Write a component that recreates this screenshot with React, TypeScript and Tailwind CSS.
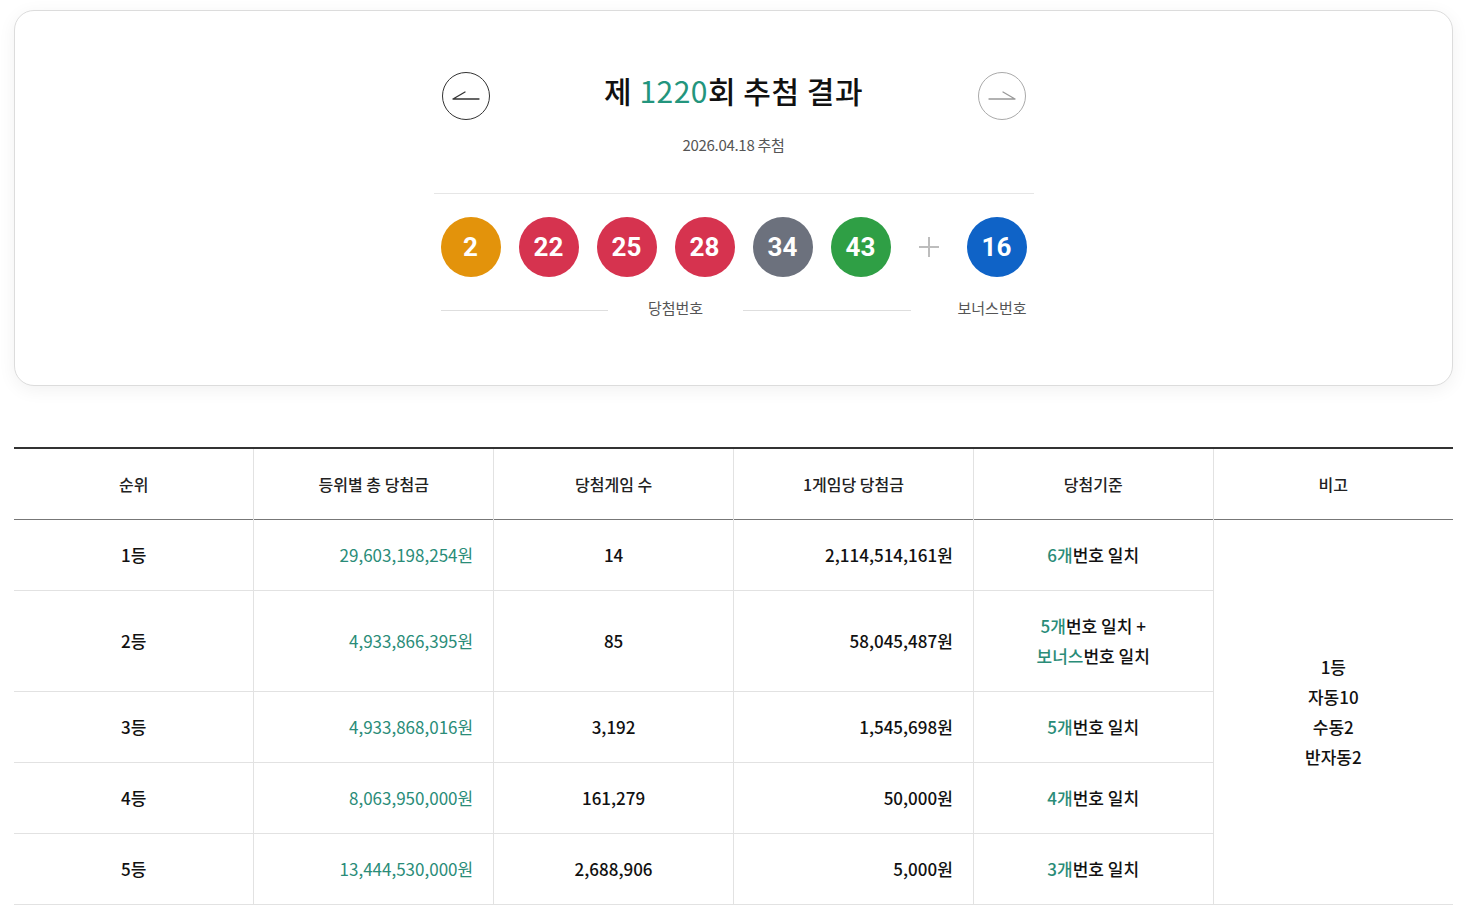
import React from "react";

const FONT = { fontFamily: '"Noto Sans CJK KR", "Noto Sans", sans-serif' };

type Ball = { n: number; c: string };

const balls: Ball[] = [
  { n: 2, c: "bg-[#e3930b]" },
  { n: 22, c: "bg-[#d6334f]" },
  { n: 25, c: "bg-[#d6334f]" },
  { n: 28, c: "bg-[#d6334f]" },
  { n: 34, c: "bg-[#6c717d]" },
  { n: 43, c: "bg-[#2f9f45]" },
];

function BallEl({ n, c }: Ball) {
  return (
    <div
      className={`w-[60px] h-[60px] rounded-full ${c} flex items-center justify-center text-white text-[26px] font-bold leading-none`}
      style={{ fontFamily: 'Roboto, "Noto Sans", sans-serif' }}
    >
      {n}
    </div>
  );
}

function ArrowBtn({ dir }: { dir: "left" | "right" }) {
  const left = dir === "left";
  return (
    <button
      className={`w-[48px] h-[48px] rounded-full border ${
        left ? "border-[#333]" : "border-[#aaa]"
      } flex items-center justify-center bg-white`}
    >
      <svg width="28" height="14" viewBox="0 0 28 14" fill="none">
        {left ? (
          <path d="M1 10 L27 10 M1 10 L13 3" stroke="#333" strokeWidth="1.3" strokeLinecap="round" />
        ) : (
          <path d="M1 10 L27 10 M27 10 L15 3" stroke="#999" strokeWidth="1.3" strokeLinecap="round" />
        )}
      </svg>
    </button>
  );
}

const G = "text-[#2a8c78]";

type Row = {
  rank: string;
  total: string;
  count: string;
  per: string;
  crit: React.ReactNode;
  tall?: boolean;
};

const rows: Row[] = [
  {
    rank: "1등",
    total: "29,603,198,254원",
    count: "14",
    per: "2,114,514,161원",
    crit: (
      <>
        <span className={G}>6개</span>번호 일치
      </>
    ),
  },
  {
    rank: "2등",
    total: "4,933,866,395원",
    count: "85",
    per: "58,045,487원",
    tall: true,
    crit: (
      <>
        <span className={G}>5개</span>번호 일치 +
        <br />
        <span className={G}>보너스</span>번호 일치
      </>
    ),
  },
  {
    rank: "3등",
    total: "4,933,868,016원",
    count: "3,192",
    per: "1,545,698원",
    crit: (
      <>
        <span className={G}>5개</span>번호 일치
      </>
    ),
  },
  {
    rank: "4등",
    total: "8,063,950,000원",
    count: "161,279",
    per: "50,000원",
    crit: (
      <>
        <span className={G}>4개</span>번호 일치
      </>
    ),
  },
  {
    rank: "5등",
    total: "13,444,530,000원",
    count: "2,688,906",
    per: "5,000원",
    crit: (
      <>
        <span className={G}>3개</span>번호 일치
      </>
    ),
  },
];

export default function App() {
  return (
    <div className="min-h-[911px] bg-white pl-[14px] pr-[15px] pt-[10px] text-[#111]" style={FONT}>
      {/* Result card */}
      <div className="rounded-[20px] border border-[#dcdcdc] bg-white shadow-[0_4px_18px_rgba(0,0,0,0.06)] pt-[61px] pb-[67px]">
        <div className="w-[600px] mx-auto">
          <div className="flex items-start justify-between px-2">
            <ArrowBtn dir="left" />
            <h1 className="flex-1 text-center text-[30px] leading-[36px] font-medium text-[#111] tracking-[0.5px]">
              제 <span className="text-[#23957d] font-normal">1220</span>회 추첨 결과
            </h1>
            <ArrowBtn dir="right" />
          </div>
          <p className="mt-[15px] text-center text-[15px] leading-[20px] text-[#555] tracking-[-0.3px]">
            2026.04.18 추첨
          </p>
          <div className="mt-[38px] h-px bg-[#e6e6e6]" />
          <div className="mt-[23px] px-[7px] flex items-center">
            <div className="flex gap-[18px]">
              {balls.map((b) => (
                <BallEl key={b.n} {...b} />
              ))}
            </div>
            <div className="w-[76px] flex items-center justify-center">
              <svg width="22" height="22" viewBox="0 0 22 22">
                <path d="M11 1 V21 M1 11 H21" stroke="#bdbdbd" strokeWidth="2" />
              </svg>
            </div>
            <BallEl n={16} c="bg-[#0f63c7]" />
          </div>
          <div className="mt-[21px] px-[7px] flex items-center text-[15px] leading-[20px] text-[#555]">
            <div className="w-[470px] flex items-center">
              <div className="flex-1 h-px bg-[#dedede] mt-[4px]" />
              <span className="px-10">당첨번호</span>
              <div className="flex-1 h-px bg-[#dedede] mt-[4px]" />
            </div>
            <div className="flex-1 text-right">보너스번호</div>
          </div>
        </div>
      </div>

      {/* Prize table */}
      <table className="mt-[61px] w-full table-fixed border-collapse border-t-2 border-t-[#333]">
        <thead>
          <tr className="h-[71px] border-b border-b-[#777] text-[16px] font-medium text-[#222]">
            <th className="font-medium border-r border-r-[#e2e2e2]">순위</th>
            <th className="font-medium border-r border-r-[#e2e2e2]">등위별 총 당첨금</th>
            <th className="font-medium border-r border-r-[#e2e2e2]">당첨게임 수</th>
            <th className="font-medium border-r border-r-[#e2e2e2]">1게임당 당첨금</th>
            <th className="font-medium border-r border-r-[#e2e2e2]">당첨기준</th>
            <th className="font-medium">비고</th>
          </tr>
        </thead>
        <tbody className="text-[17px] font-medium">
          {rows.map((r, i) => (
            <tr
              key={r.rank}
              className={`${r.tall ? "h-[101px]" : "h-[71px]"} border-b border-b-[#e2e2e2]`}
            >
              <td className="text-center border-r border-r-[#e2e2e2]">{r.rank}</td>
              <td className={`text-right pr-5 border-r border-r-[#e2e2e2] font-normal ${G}`}>{r.total}</td>
              <td className="text-center border-r border-r-[#e2e2e2]">{r.count}</td>
              <td className="text-right pr-5 border-r border-r-[#e2e2e2]">{r.per}</td>
              <td className="text-center leading-[30px] border-r border-r-[#e2e2e2]">{r.crit}</td>
              {i === 0 && (
                <td rowSpan={5} className="text-center align-middle leading-[30px]">
                  1등
                  <br />
                  자동10
                  <br />
                  수동2
                  <br />
                  반자동2
                </td>
              )}
            </tr>
          ))}
        </tbody>
      </table>
    </div>
  );
}
